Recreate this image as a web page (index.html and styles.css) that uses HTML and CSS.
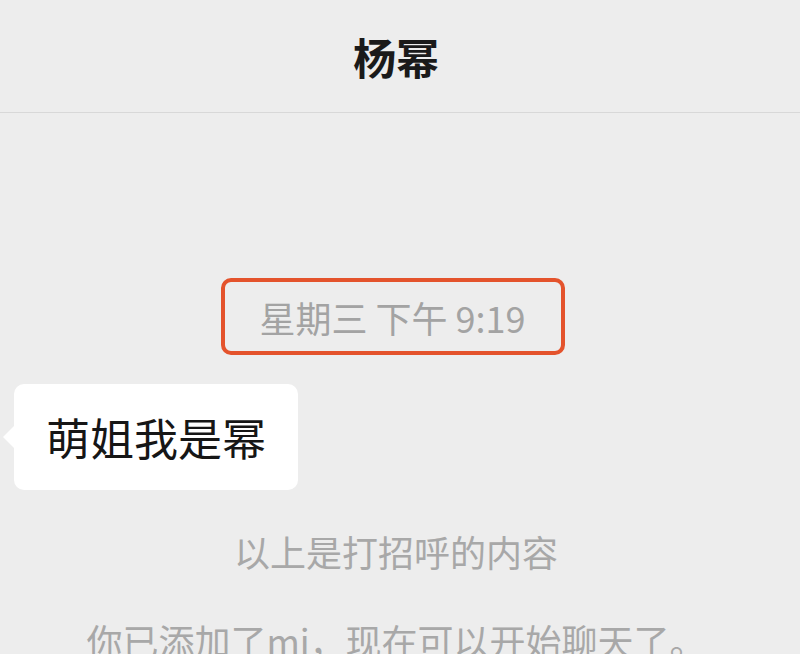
FILE: index.html
```html
<!DOCTYPE html>
<html lang="zh-CN">
<head>
    <meta charset="UTF-8">
    <meta name="viewport" content="width=device-width, initial-scale=1.0">
    <title>杨幂</title>
    <link rel="stylesheet" href="styles.css">
</head>
<body>
    <div class="header">杨幂</div>
    <div class="chat">
        <div class="time"><span>星期三 下午 9:19</span></div>
        <div class="row">
            <div class="bubble">萌姐我是幂</div>
        </div>
        <div class="notice first">以上是打招呼的内容</div>
        <div class="notice last">你已添加了mi，现在可以开始聊天了。</div>
    </div>
</body>
</html>
```
FILE: styles.css
```css
body{
    margin: 0px;
    padding: 0px;
    background-color: #ededed;
    font-family: "Noto Sans CJK SC", "Noto Sans", sans-serif;
    overflow: hidden;
}
.header{
    height: 112px;
    line-height: 112px;
    padding-right: 8px;
    text-align: center;
    font-size: 43px;
    font-weight: 700;
    color: #1a1a1a;
    border-bottom: solid 1px #d8d8d8;
}
.chat{
    display: flex;
    flex-direction: column;
    padding-top: 165px;
    padding-right: 8px;
}
.time{
    align-self: center;
    margin-left: -7px;
    width: 336px;
    height: 69px;
    border: solid 4px #e4532c;
    border-radius: 10px;
    display: flex;
    align-items: center;
    justify-content: center;
    font-size: 36px;
    color: #a3a3a3;
}
.row{
    margin-top: 29px;
    padding-left: 14px;
}
.bubble{
    position: relative;
    display: inline-block;
    background-color: #ffffff;
    border-radius: 10px;
    padding: 0px 32px;
    height: 106px;
    line-height: 106px;
    font-size: 44px;
    color: #161616;
}
.bubble::before{
    content: "";
    position: absolute;
    left: -11px;
    top: 42px;
    border-top: solid 11px transparent;
    border-bottom: solid 11px transparent;
    border-right: solid 11px #ffffff;
}
.notice{
    text-align: center;
    font-size: 36px;
    line-height: 40px;
    color: #a8a8a8;
}
.first{
    margin-top: 41px;
}
.last{
    margin-top: 49px;
    white-space: nowrap;
}
```
